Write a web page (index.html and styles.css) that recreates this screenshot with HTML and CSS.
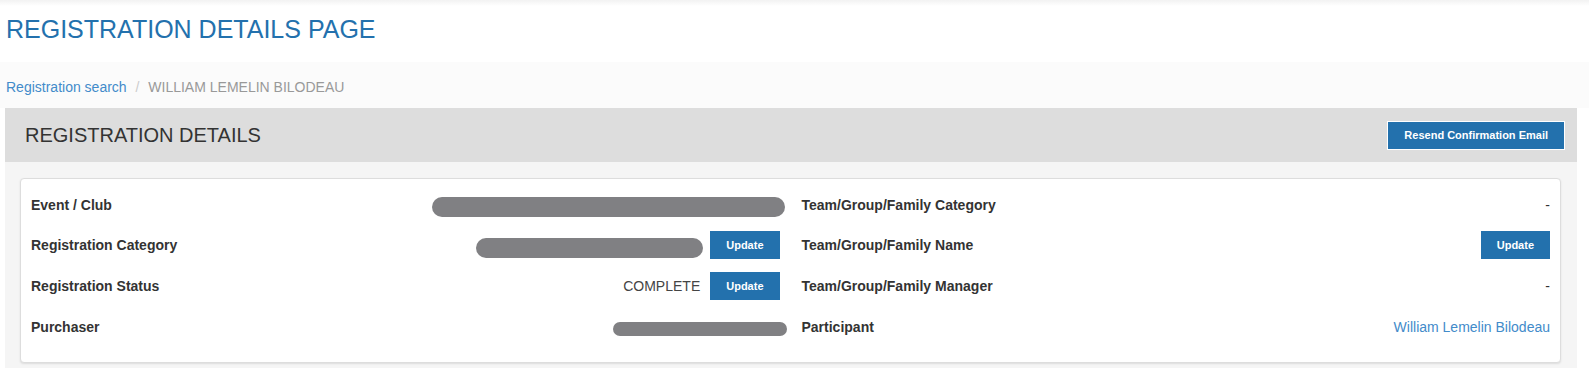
FILE: index.html
```html
<!DOCTYPE html>
<html lang="en">
  <head>
    <meta charset="UTF-8" />
    <meta name="viewport" content="width=device-width, initial-scale=1.0" />
    <title>Registration Details</title>
    <link rel="stylesheet" href="styles.css">
  </head>
  <body>
    <div class="top-shade"></div>

    <h1 class="page-title">REGISTRATION DETAILS PAGE</h1>

    <ol class="breadcrumb">
      <li><a href="#">Registration search</a></li>
      <li class="active">WILLIAM LEMELIN BILODEAU</li>
    </ol>

    <div class="panel">
      <div class="panel-heading">
        <h2>REGISTRATION DETAILS</h2>
        <button class="btn btn-outline">Resend Confirmation Email</button>
      </div>

      <div class="panel-body">
        <div class="details-card">
          <div class="detail-col">
            <div class="detail-row">
              <span class="label">Event / Club</span>
              <span class="value"><span class="redacted redacted-wide"></span></span>
            </div>
            <div class="detail-row">
              <span class="label">Registration Category</span>
              <span class="value">
                <span class="redacted redacted-mid"></span>
                <button class="btn">Update</button>
              </span>
            </div>
            <div class="detail-row row-tall">
              <span class="label">Registration Status</span>
              <span class="value">
                <span class="status">COMPLETE</span>
                <button class="btn">Update</button>
              </span>
            </div>
            <div class="detail-row">
              <span class="label">Purchaser</span>
              <span class="value"><span class="redacted redacted-short"></span></span>
            </div>
          </div>

          <div class="detail-col">
            <div class="detail-row">
              <span class="label">Team/Group/Family Category</span>
              <span class="value">-</span>
            </div>
            <div class="detail-row">
              <span class="label">Team/Group/Family Name</span>
              <span class="value"><button class="btn">Update</button></span>
            </div>
            <div class="detail-row row-tall">
              <span class="label">Team/Group/Family Manager</span>
              <span class="value">-</span>
            </div>
            <div class="detail-row">
              <span class="label">Participant</span>
              <span class="value"><a href="#">William Lemelin Bilodeau</a></span>
            </div>
          </div>
        </div>
      </div>
    </div>
  </body>
</html>
```

FILE: styles.css
```css
body {
  margin: 0;
  font-family: "Liberation Sans", Arial, sans-serif;
  font-size: 14px;
  color: #333;
  background-color: #fff;
}

a {
  color: #428bca;
  text-decoration: none;
}

.top-shade {
  height: 6px;
  background: linear-gradient(#f2f2f2, #fff);
}

.page-title {
  margin: 9px 0 19px;
  padding: 0 6px;
  font-size: 25px;
  font-weight: normal;
  line-height: 28px;
  color: #2371ad;
}

.breadcrumb {
  list-style: none;
  margin: 0;
  padding: 15px 6px 11px;
  line-height: 20px;
  background-color: #fbfbfb;
}

.breadcrumb li {
  display: inline-block;
}

.breadcrumb li + li:before {
  content: "/\00a0";
  padding: 0 5px;
  color: #ccc;
}

.breadcrumb .active {
  color: #999;
}

.panel {
  margin: 0 12px 0 5px;
}

.panel-heading {
  height: 54px;
  padding: 0 12px 0 20px;
  display: flex;
  align-items: center;
  justify-content: space-between;
  background-color: #ddd;
}

.panel-heading h2 {
  margin: 0;
  font-size: 20px;
  font-weight: normal;
  line-height: 24px;
  color: #333;
}

.panel-body {
  padding: 16px 16px 5px 15px;
  background-color: #f5f5f5;
}

.details-card {
  display: grid;
  grid-template-columns: 1fr 1fr;
  column-gap: 22px;
  padding: 6px 10px 15px;
  background: white;
  border: 1px solid #ddd;
  border-radius: 4px;
  box-shadow: 0 1px 2px rgba(0, 0, 0, 0.1);
}

.detail-row {
  height: 40px;
  display: flex;
  align-items: center;
  justify-content: space-between;
}

.row-tall {
  height: 42px;
}

.label {
  font-weight: bold;
  color: #333;
}

.value {
  display: flex;
  align-items: center;
  gap: 10px;
}

.status {
  color: #444;
}

.redacted {
  display: inline-block;
  background-color: #808083;
  border-radius: 10px;
}

.redacted-wide {
  width: 353px;
  height: 20px;
  margin-right: -5px;
  margin-top: 3px;
}

.redacted-mid {
  width: 227px;
  height: 20px;
  margin-right: -3px;
  margin-top: 6px;
}

.redacted-short {
  width: 174px;
  height: 14px;
  margin-right: -7px;
  margin-top: 4px;
  border-radius: 7px;
}

.btn {
  height: 28px;
  padding: 0 16px;
  font-family: inherit;
  font-size: 11px;
  font-weight: bold;
  color: white;
  background-color: #2371ad;
  border: none;
  cursor: pointer;
}

.btn-outline {
  height: 29px;
  border: 1px solid white;
}
```
